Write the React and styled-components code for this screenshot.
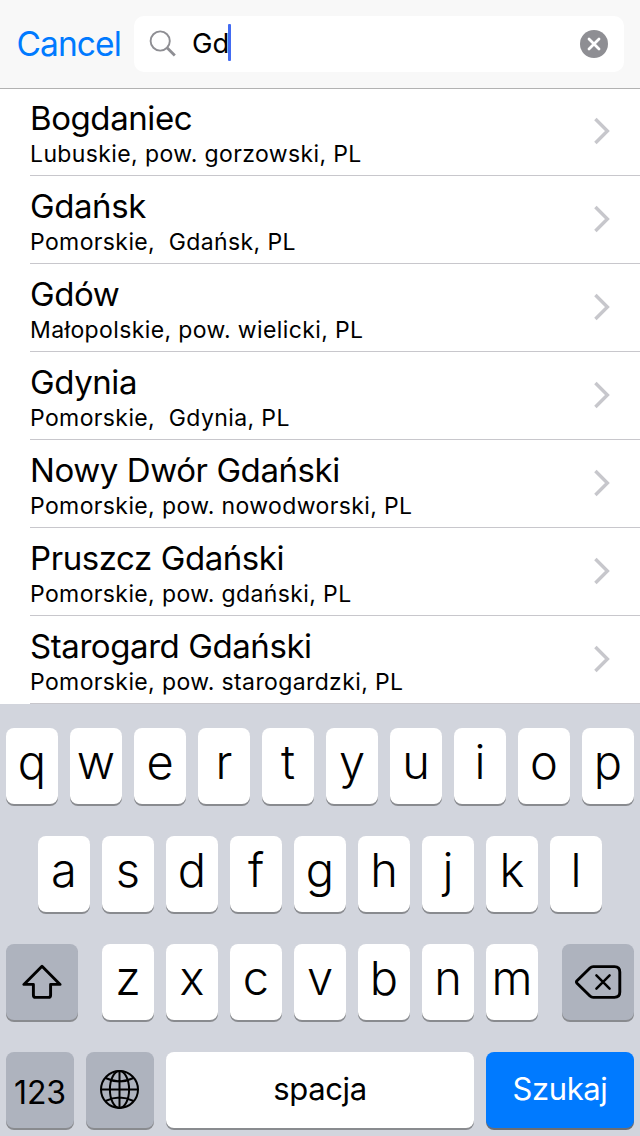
import React from "react";
import styled, { createGlobalStyle } from "styled-components";

const places = [
  { name: "Bogdaniec", region: "Lubuskie, pow. gorzowski, PL" },
  { name: "Gdańsk", region: "Pomorskie,  Gdańsk, PL" },
  { name: "Gdów", region: "Małopolskie, pow. wielicki, PL" },
  { name: "Gdynia", region: "Pomorskie,  Gdynia, PL" },
  { name: "Nowy Dwór Gdański", region: "Pomorskie, pow. nowodworski, PL" },
  { name: "Pruszcz Gdański", region: "Pomorskie, pow. gdański, PL" },
  { name: "Starogard Gdański", region: "Pomorskie, pow. starogardzki, PL" },
];

const SearchIcon = () => (
  <svg width="28" height="28" viewBox="0 0 28 28" fill="none" stroke="#8e8e93">
    <circle cx="11.2" cy="11" r="9.6" strokeWidth="1.9" />
    <path d="M17.8 17.6L25.8 25.6" strokeWidth="2.8" />
  </svg>
);

const ClearIcon = () => (
  <svg width="28" height="28" viewBox="0 0 28 28">
    <circle cx="14" cy="14" r="14" fill="#8e8e93" />
    <path
      d="M9 9l10 10M19 9L9 19"
      stroke="#fff"
      strokeWidth="2.8"
      strokeLinecap="round"
    />
  </svg>
);

const Chevron = () => (
  <svg width="17" height="28" viewBox="0 0 17 28" fill="none">
    <path d="M2.4 2l12 12L2.4 26" stroke="#c7c7cc" strokeWidth="3.4" />
  </svg>
);

const ShiftIcon = () => (
  <svg
    width="40"
    height="36"
    viewBox="0 0 40 36"
    fill="none"
    stroke="#000"
    strokeWidth="2.9"
    strokeLinejoin="round"
  >
    <path d="M20 2.2L1.9 20.4H11.4V31.2Q11.4 33.4 13.6 33.4H26.4Q28.6 33.4 28.6 31.2V20.4H38.1Z" />
  </svg>
);

const BackspaceIcon = () => (
  <svg
    width="48"
    height="36"
    viewBox="0 0 48 36"
    fill="none"
    stroke="#000"
    strokeWidth="2.9"
  >
    <path
      d="M19.2 2.6H40.5Q45.8 2.6 45.8 7.9V28.1Q45.8 33.4 40.5 33.4H19.2Q17.4 33.4 16 32L3 19.2Q1.9 18 3 16.8L16 4Q17.4 2.6 19.2 2.6Z"
      strokeLinejoin="round"
    />
    <path d="M22.4 11.4l13.2 13.2M35.6 11.4L22.4 24.6" strokeLinecap="round" strokeWidth="2.5" />
  </svg>
);

const GlobeIcon = () => (
  <svg
    width="40"
    height="40"
    viewBox="0 0 40 40"
    fill="none"
    stroke="#000"
    strokeWidth="2"
  >
    <circle cx="19.5" cy="19.5" r="18.5" />
    <ellipse cx="19.5" cy="19.5" rx="9.6" ry="18.5" />
    <path d="M19.5 1v37M1 19.5h37M5.5 8Q19.5 14.8 33.5 8M5.5 31Q19.5 24.2 33.5 31" />
  </svg>
);

const Letters = ({ keys }) =>
  keys.split("").map((letter) => <Key key={letter}>{letter}</Key>);

const App = () => {
  return (
    <>
      <GlobalStyle />
      <Screen>
        <Header>
          <Cancel>Cancel</Cancel>
          <SearchField>
            <SearchIcon />
            <Query>Gd</Query>
            <Caret />
            <ClearIcon />
          </SearchField>
        </Header>
        <List>
          {places.map((place) => (
            <Row key={place.name}>
              <div>
                <Name>{place.name}</Name>
                <Region>{place.region}</Region>
              </div>
              <Chevron />
            </Row>
          ))}
        </List>
        <Keyboard>
          <KeyRow>
            <Letters keys="qwertyuiop" />
          </KeyRow>
          <KeyRow>
            <Letters keys="asdfghjkl" />
          </KeyRow>
          <KeyRow $spread>
            <FunctionKey $width={72}>
              <ShiftIcon />
            </FunctionKey>
            <LetterGroup>
              <Letters keys="zxcvbnm" />
            </LetterGroup>
            <FunctionKey $width={72}>
              <BackspaceIcon />
            </FunctionKey>
          </KeyRow>
          <KeyRow>
            <NumbersKey $width={68}>123</NumbersKey>
            <FunctionKey $width={68}>
              <GlobeIcon />
            </FunctionKey>
            <SpaceKey>spacja</SpaceKey>
            <SearchKey>Szukaj</SearchKey>
          </KeyRow>
        </Keyboard>
      </Screen>
    </>
  );
};

export default App;

const GlobalStyle = createGlobalStyle`
  * {
    box-sizing: border-box;
  }
  body {
    margin: 0;
    background: #fff;
    color: #000;
    font-family: Inter, "Liberation Sans", sans-serif;
  }
  svg {
    display: block;
    flex: none;
  }
`;

const Screen = styled.main`
  width: 640px;
  height: 1136px;
  display: flex;
  flex-direction: column;
  overflow: hidden;
`;

const Header = styled.header`
  position: relative;
  flex: none;
  height: 88px;
  display: flex;
  align-items: center;
  padding: 0 16px;
  background: #f8f8f8;
  box-shadow: 0 1px 0 #b2b2b2;
`;

const Cancel = styled.span`
  width: 118px;
  flex: none;
  padding-left: 0.5px;
  color: #007aff;
  font-size: 33.5px;
  line-height: 40px;
  letter-spacing: -0.9px;
`;

const SearchField = styled.div`
  flex: 1;
  height: 56px;
  display: flex;
  align-items: center;
  padding: 0 16px 0 15px;
  border-radius: 10px;
  background: #fff;
  svg:last-child {
    margin-left: auto;
  }
`;

const Query = styled.span`
  margin-left: 15px;
  width: 36px;
  padding-bottom: 2px;
  font-size: 27.5px;
  line-height: 36px;
  letter-spacing: -0.1px;
`;

const Caret = styled.i`
  width: 3px;
  height: 37px;
  margin-top: -3px;
  border-radius: 1px;
  background: #426bf2;
`;

const List = styled.ul`
  flex: none;
  margin: 0;
  padding: 0 0 0 30px;
  list-style: none;
`;

const Row = styled.li`
  height: 88px;
  display: flex;
  justify-content: space-between;
  align-items: center;
  padding: 0 30px 1px 0;
  border-bottom: 1px solid #c8c7cc;
`;

const Name = styled.div`
  margin-top: 6px;
  font-size: 33px;
  line-height: 40px;
  letter-spacing: -0.42px;
`;

const Region = styled.div`
  font-size: 23px;
  line-height: 33px;
  letter-spacing: 0.38px;
  white-space: pre;
`;

const Keyboard = styled.section`
  flex: 1;
  display: flex;
  flex-direction: column;
  gap: 32px;
  padding: 24px 6px 0;
  background: #d2d5dd;
`;

const KeyRow = styled.div`
  display: flex;
  justify-content: ${(props) => (props.$spread ? "space-between" : "center")};
  gap: 12px;
`;

const LetterGroup = styled.div`
  display: flex;
  gap: 12px;
`;

const Key = styled.div`
  flex: none;
  width: 52px;
  height: 76px;
  display: flex;
  align-items: center;
  justify-content: center;
  padding-bottom: 9px;
  border-radius: 8px;
  background: #fff;
  box-shadow: 0 2px 0 #898b8f;
  font-size: 47px;
  font-weight: 360;
`;

const FunctionKey = styled(Key)`
  width: ${(props) => props.$width}px;
  padding-bottom: 0;
  background: #aeb3be;
`;

const NumbersKey = styled(FunctionKey)`
  padding-top: 4px;
  font-size: 32px;
  font-weight: 370;
  letter-spacing: -0.1px;
`;

const SpaceKey = styled(Key)`
  width: 308px;
  padding-bottom: 4px;
  font-size: 31px;
  font-weight: 400;
  letter-spacing: -0.4px;
`;

const SearchKey = styled(SpaceKey)`
  width: 148px;
  background: #007aff;
  box-shadow: 0 2px 0 #6b6e74;
  color: #fff;
`;
